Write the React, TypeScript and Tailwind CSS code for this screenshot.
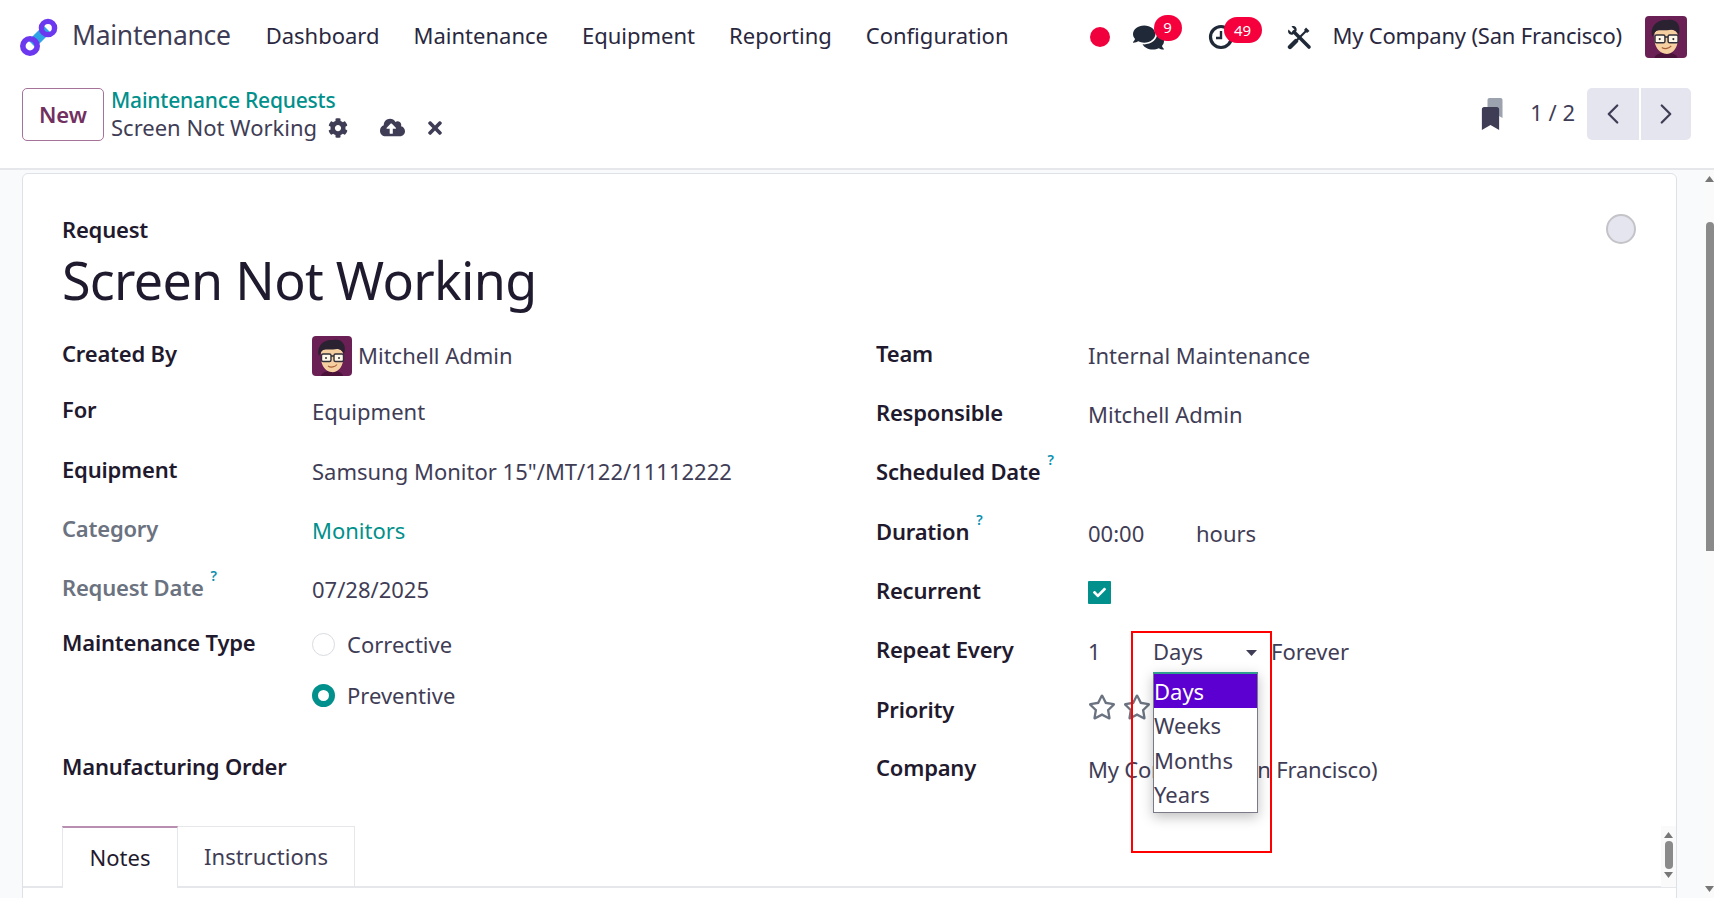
import React from 'react';
import { FaCog, FaCloudUploadAlt, FaTimes, FaComments, FaBookmark, FaRegStar, FaCheck } from 'react-icons/fa';
import { ChevronLeft, ChevronRight } from 'lucide-react';

const Logo = () => (
  <svg width="38" height="38" viewBox="0 0 38 38">
    <path d="M12 26 L27 11" stroke="#2ea3e6" strokeWidth="10" />
    <circle cx="10" cy="28" r="7.2" fill="none" stroke="#6b38f0" strokeWidth="5.6" />
    <circle cx="28" cy="10" r="6.6" fill="none" stroke="#6b38f0" strokeWidth="5.4" />
  </svg>
);

const Avatar = ({ size }: { size: number }) => (
  <svg width={size} height={size} viewBox="0 0 40 40" className="rounded-[4px] shrink-0">
    <rect width="40" height="40" fill="#6a1f55" />
    <path d="M9 40 C10 33 30 33 31 40 Z" fill="#4a1239" />
    <path d="M9 17 C9 11 29 10 31 17 L31 25 C30 33 24 37 19 36 C13 35 9 29 9 22 Z" fill="#f5cfa0" />
    <path d="M7 20 C4 10 12 3 21 4 C30 2 35 9 32 18 C30 14 28 13 25 13 C20 14 14 13 11 14 C9 15 8 18 7 20 Z" fill="#2a2230" />
    <rect x="9.5" y="18" width="9.5" height="7.5" rx="1.5" fill="#fff7e8" stroke="#33303a" strokeWidth="1.4" />
    <rect x="22" y="18" width="9.5" height="7.5" rx="1.5" fill="#fff7e8" stroke="#33303a" strokeWidth="1.4" />
    <path d="M19 20 H22" stroke="#33303a" strokeWidth="1.4" />
    <circle cx="14" cy="22" r="1" fill="#33303a" />
    <circle cx="27" cy="22" r="1" fill="#33303a" />
    <path d="M16 30 C19 32 23 31 25 28.5" stroke="#a8603a" strokeWidth="1.2" fill="none" />
  </svg>
);

const ClockIcon = () => (
  <svg width="26" height="26" viewBox="0 0 26 26" fill="none">
    <circle cx="13" cy="13" r="10.5" stroke="#1f2937" strokeWidth="3.2" />
    <path d="M13 7 V14 H8" stroke="#1f2937" strokeWidth="2.4" />
  </svg>
);

const ToolsIcon = () => (
  <svg width="25" height="25" viewBox="0 0 25 25" fill="none">
    {/* wrench */}
    <path d="M7 7 L22 22" stroke="#1f2937" strokeWidth="3.6" strokeLinecap="round" />
    <path d="M1.5 4.5 L4.5 7.5 L7.5 4.5 L4.5 1.5 C7.5 0 10.5 2.5 9.5 6 L6 9.5 C2.5 10.5 0 7.5 1.5 4.5 Z" fill="#1f2937" />
    {/* screwdriver */}
    <path d="M20 5 L5 20" stroke="#1f2937" strokeWidth="2.2" />
    <path d="M9 16 L3 22" stroke="#1f2937" strokeWidth="4.4" strokeLinecap="round" />
    <path d="M19 2.5 L22.5 6 L20 8 L17 5 Z" fill="#1f2937" />
  </svg>
);

const Label = ({ text, muted, help }: { text: string; muted?: boolean; help?: boolean }) => (
  <div className={`flex items-start pb-[4px] text-[22px] font-semibold tracking-[-0.2px] ${muted ? 'text-[#6b7280]' : 'text-[#1f1a2e]'}`}>
    {text}
    {help && <span className="ml-[7px] mt-[-6px] text-[14px] font-semibold text-[#0a8fb0]">?</span>}
  </div>
);

const Radio = ({ on, text }: { on?: boolean; text: string }) => (
  <div className="flex items-center gap-[12px]">
    {on ? (
      <span className="w-[23px] h-[23px] rounded-full border-[6px] border-[#01908b] bg-white" />
    ) : (
      <span className="w-[23px] h-[23px] rounded-full border border-[#d9dbe0] bg-white" />
    )}
    <span>{text}</span>
  </div>
);

const Arrow = ({ down, className }: { down?: boolean; className: string }) => (
  <svg width="9" height="6" viewBox="0 0 9 6" className={className}>
    <path d={down ? 'M0 0 H9 L4.5 6 Z' : 'M0 6 H9 L4.5 0 Z'} fill="#777" />
  </svg>
);

export default function App() {
  return (
    <div className="h-screen w-screen overflow-hidden flex flex-col bg-white text-[22px] text-[#3f3d56] font-['Noto_Sans',sans-serif]">
      {/* Top navbar */}
      <div className="h-[74px] flex items-center shrink-0 pl-[20px] pr-[27px]">
        <Logo />
        <span className="ml-[14px] pb-[3px] text-[26.5px] text-[#3f3d56] tracking-[-0.3px]">Maintenance</span>
        <nav className="ml-[35px] pb-[3px] flex items-center gap-[34px] text-[#2a2840]">
          <span>Dashboard</span>
          <span>Maintenance</span>
          <span>Equipment</span>
          <span>Reporting</span>
          <span>Configuration</span>
        </nav>
        <div className="ml-auto flex items-center">
          <span className="w-[20px] h-[20px] rounded-full bg-[#f0003c]" />
          <span className="relative ml-[23px] flex">
            <FaComments size={31} color="#1f2937" />
            <span className="absolute left-[21px] top-[-7px] w-[28px] h-[26px] rounded-full bg-[#f5003d] text-white text-[15px] flex items-center justify-center">9</span>
          </span>
          <span className="relative ml-[44px] flex">
            <ClockIcon />
            <span className="absolute left-[16px] top-[-7px] w-[38px] h-[26px] rounded-full bg-[#f5003d] text-white text-[15px] flex items-center justify-center">49</span>
          </span>
          <span className="ml-[53px] flex"><ToolsIcon /></span>
          <span className="ml-[21px] pb-[3px] tracking-[-0.2px] text-[#2a2840]">My Company (San Francisco)</span>
          <span className="ml-[23px] flex"><Avatar size={42} /></span>
        </div>
      </div>

      {/* Control panel */}
      <div className="h-[96px] shrink-0 border-b-2 border-[#e5e7eb] flex pl-[22px] pr-[23px] pt-[14px]">
        <button className="w-[82px] h-[53px] rounded-[5px] border border-[#a5739a] text-[#71305f] font-semibold text-[22px]">New</button>
        <div className="ml-[7px] mt-[-1px]">
          <div className="h-[27px] flex items-center font-medium text-[21px] tracking-[-0.2px] text-[#01908b]">Maintenance Requests</div>
          <div className="h-[30px] flex items-center -mt-[2px]">
            <span>Screen Not Working</span>
            <FaCog size={20} className="ml-[11px] mt-[1px]" />
            <FaCloudUploadAlt size={25} className="ml-[32px] mt-[1px]" />
            <FaTimes size={20} className="ml-[20px] mt-[1px]" />
          </div>
        </div>
        <div className="ml-auto flex items-start">
          <span className="relative w-[26px] h-[32px] mt-[10px] mr-[25px]">
            <FaBookmark size={20} color="#9ca3af" className="absolute right-0 top-0" />
            <FaBookmark size={23} color="#3f3d56" className="absolute left-0 bottom-0" />
          </span>
          <span className="mt-[8px] mr-[12px] text-[22px]">1 / 2</span>
          <div className="flex gap-[2px]">
            <span className="w-[52px] h-[52px] rounded-l-[5px] bg-[#e5e5ef] flex items-center justify-center"><ChevronLeft size={34} strokeWidth={1.6} /></span>
            <span className="w-[50px] h-[52px] rounded-r-[5px] bg-[#e5e5ef] flex items-center justify-center"><ChevronRight size={34} strokeWidth={1.6} /></span>
          </div>
        </div>
      </div>

      {/* Form area */}
      <div className="flex-1 min-h-0 flex bg-[#f9fafb]">
        <div className="flex-1 min-w-0 pl-[22px] pt-[3px]">
          <div className="relative w-[1655px] h-[801px] bg-white border border-[#dee2e6] rounded-t-[6px] pl-[39px] pt-[40px]">
            <span className="absolute right-[40px] top-[40px] w-[30px] h-[30px] rounded-full bg-[#e5e5ef] border-2 border-[#c4c4c8]" />
            <div className="h-[30px] flex items-center font-semibold tracking-[-0.2px] text-[#1f1a2e]">Request</div>
            <div className="h-[70px] mt-[1px] flex items-center text-[52px] tracking-[-0.7px] text-[#1f1a2e]">Screen Not Working</div>

            <div className="flex mt-[20px]">
              {/* Left column */}
              <div className="w-[814px] flex flex-col">
                <div className="h-[40px] flex items-center">
                  <div className="w-[250px]"><Label text="Created By" /></div>
                  <div className="flex items-center gap-[6px]"><span className="flex mt-[2px]"><Avatar size={40} /></span>Mitchell Admin</div>
                </div>
                <div className="h-[40px] mt-[16px] flex items-center">
                  <div className="w-[250px]"><Label text="For" /></div>
                  <div>Equipment</div>
                </div>
                <div className="h-[40px] mt-[20px] flex items-center">
                  <div className="w-[250px]"><Label text="Equipment" /></div>
                  <div>Samsung Monitor 15"/MT/122/11112222</div>
                </div>
                <div className="h-[40px] mt-[19px] flex items-center">
                  <div className="w-[250px]"><Label text="Category" muted /></div>
                  <div className="text-[#01908b]">Monitors</div>
                </div>
                <div className="h-[40px] mt-[19px] flex items-center">
                  <div className="w-[250px]"><Label text="Request Date" muted help /></div>
                  <div>07/28/2025</div>
                </div>
                <div className="h-[40px] mt-[15px] flex items-center">
                  <div className="w-[250px]"><Label text="Maintenance Type" /></div>
                  <Radio text="Corrective" />
                </div>
                <div className="h-[40px] mt-[11px] flex items-center pl-[250px]">
                  <Radio on text="Preventive" />
                </div>
                <div className="h-[40px] mt-[33px] flex items-center">
                  <div className="w-[250px]"><Label text="Manufacturing Order" /></div>
                </div>
              </div>

              {/* Right column */}
              <div className="flex-1 flex flex-col gap-[19.4px]">
                <div className="h-[40px] flex items-center">
                  <div className="w-[212px]"><Label text="Team" /></div>
                  <div>Internal Maintenance</div>
                </div>
                <div className="h-[40px] flex items-center">
                  <div className="w-[212px]"><Label text="Responsible" /></div>
                  <div>Mitchell Admin</div>
                </div>
                <div className="h-[40px] flex items-center">
                  <div className="w-[212px]"><Label text="Scheduled Date" help /></div>
                </div>
                <div className="h-[40px] flex items-center">
                  <div className="w-[212px]"><Label text="Duration" help /></div>
                  <div className="w-[108px]">00:00</div>
                  <div>hours</div>
                </div>
                <div className="h-[40px] flex items-center">
                  <div className="w-[212px]"><Label text="Recurrent" /></div>
                  <span className="w-[23px] h-[23px] bg-[#01908b] rounded-[1px] flex items-center justify-center"><FaCheck size={13} color="#fff" /></span>
                </div>
                <div className="h-[40px] flex items-center">
                  <div className="w-[212px]"><Label text="Repeat Every" /></div>
                  <div className="w-[65px]">1</div>
                  <div className="relative w-[118px] h-[30px] flex items-center">
                    Days
                    <svg width="11" height="6" viewBox="0 0 11 6" className="absolute left-[93px] top-[13px]"><path d="M0 0 H11 L5.5 6 Z" fill="#3f3d56" /></svg>
                    {/* annotation box drawn over the form */}
                    <div className="absolute left-[-22px] top-[-6px] z-10 w-[141px] h-[222px] border-2 border-[#ff0000] pointer-events-none" />
                    {/* open select list */}
                    <div className="absolute left-0 top-[35px] z-20 w-[105px] h-[141px] bg-white border border-[#7a7a88] border-t-2 border-t-[#2f9e8f] shadow-[0_4px_12px_rgba(0,0,0,0.25)] leading-[34.5px]">
                      <div className="h-[34.5px] bg-[#5b00d1] text-white">Days</div>
                      <div className="h-[34.5px]">Weeks</div>
                      <div className="h-[34.5px]">Months</div>
                      <div className="h-[34.5px]">Years</div>
                    </div>
                  </div>
                  <div>Forever</div>
                </div>
                <div className="h-[40px] flex items-center">
                  <div className="w-[212px]"><Label text="Priority" /></div>
                  <div className="flex gap-[7px] pb-[8px] text-[#6b7280]"><FaRegStar size={28} /><FaRegStar size={28} /></div>
                </div>
                <div className="h-[40px] -mt-[1px] flex items-center">
                  <div className="w-[212px]"><Label text="Company" /></div>
                  <div className="tracking-[-0.2px]">My Company (San Francisco)</div>
                </div>
              </div>
            </div>

            {/* Tabs */}
            <div className="absolute left-0 right-0 top-[652px] h-[62px] border-b-2 border-[#e5e7eb] flex pl-[39px]">
              <div className="w-[116px] h-[62px] pb-[2px] border border-[#e5e7eb] border-t-2 border-t-[#b88fb0] border-b-0 bg-white flex items-center justify-center text-[#1f1a2e]">Notes</div>
              <div className="w-[177px] h-[62px] pb-[2px] border border-[#e5e7eb] border-l-0 border-b-0 flex items-center justify-center">Instructions</div>
            </div>

            {/* Inner scrollbar */}
            <div className="absolute right-0 top-[652px] w-[15px] h-[61px] bg-[#fafafa] flex flex-col items-center">
              <Arrow className="mt-[6px]" />
              <span className="w-[8px] h-[28px] mt-[3px] rounded-full bg-[#8a8a8a]" />
              <Arrow down className="mt-[3px]" />
            </div>
          </div>
        </div>

        {/* Page scrollbar */}
        <div className="w-[9px] shrink-0 bg-[#fafafa] flex flex-col items-center relative">
          <Arrow className="mt-[6px]" />
          <span className="w-[8px] h-[329px] mt-[40px] rounded-t-full bg-[#8a8a8a]" />
          <Arrow down className="absolute bottom-[6px]" />
        </div>
      </div>
    </div>
  );
}
